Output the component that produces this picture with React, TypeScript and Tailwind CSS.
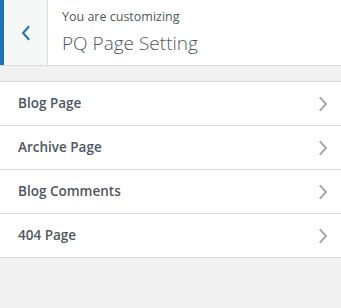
import React from 'react';

const items = ['Blog Page', 'Archive Page', 'Blog Comments', '404 Page'];

const Chevron = ({ left }: { left?: boolean }) => (
  <svg width="10" height="16" viewBox="0 0 10 16" fill="none">
    <path
      d={left ? 'M7.5 2 L2 8 L7.5 14' : 'M2.5 2 L8 8 L2.5 14'}
      stroke="currentColor"
      strokeWidth="2"
      strokeLinecap="square"
      strokeLinejoin="miter"
    />
  </svg>
);

export default function App() {
  return (
    <div
      className="w-[341px] h-[308px] bg-[#f0f0f1] text-[#50575e]"
      style={{ fontFamily: '"Open Sans", "Noto Sans", sans-serif' }}
    >
      {/* Header */}
      <div className="flex h-[66px] bg-white border-b border-[#dcdcde]">
        <div className="w-[4px] bg-[#2271b1]" />
        <button className="w-[44px] flex items-center justify-center bg-[#f6f7f7] border-r border-[#dcdcde] text-[#2271b1]">
          <Chevron left />
        </button>
        <div className="pl-[14px] pt-[7px] flex flex-col">
          <span className="text-[12.5px] leading-[20px]">You are customizing</span>
          <span className="text-[19px] leading-[28px] font-light mt-[2px]">PQ Page Setting</span>
        </div>
      </div>

      {/* Sections */}
      <ul className="mt-[15px] border-t border-[#dcdcde] bg-white">
        {items.map(label => (
          <li
            key={label}
            className="h-[44px] flex items-center justify-between pl-[18px] pr-[13px] border-b border-[#dcdcde]"
          >
            <span className="text-[13.5px] font-semibold">{label}</span>
            <span className="text-[#a7aaad]">
              <Chevron />
            </span>
          </li>
        ))}
      </ul>
    </div>
  );
}
